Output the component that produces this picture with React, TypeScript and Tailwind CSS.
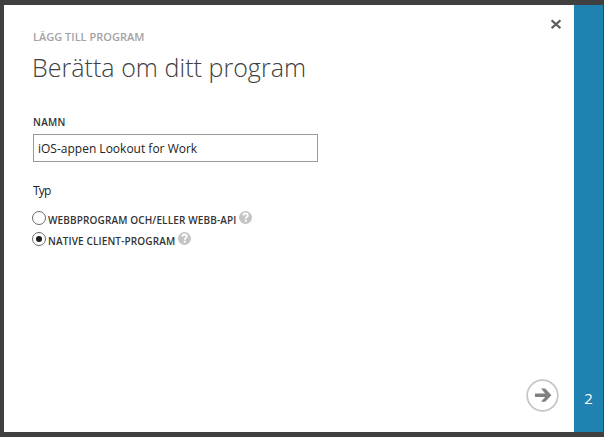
import { useState } from "react";

function HelpBadge() {
  return (
    <svg className="block h-[13px] w-[13px] shrink-0" viewBox="0 0 13 13" aria-label="?">
      <circle cx="6.5" cy="6.5" r="6.5" fill="#c4c4c4" />
      <path d="M4.3 4.5C4.4 3.2 5.3 2.5 6.5 2.5c1.4 0 2.3.7 2.3 1.8 0 1.6-2.1 1.6-2.1 3.5" fill="none" stroke="#fff" strokeWidth="1.8" />
      <rect x="5.7" y="8.8" width="2" height="1.9" fill="#fff" />
    </svg>
  );
}

function Radio({ checked }: { checked: boolean }) {
  return (
    <span className="-ml-px flex h-[14px] w-[14px] shrink-0 items-center justify-center rounded-full border border-[#6a6a6a] bg-white">
      {checked && <span className="h-[6px] w-[6px] rounded-full bg-[#1c1c1c]" />}
    </span>
  );
}

export default function App() {
  const [type, setType] = useState("native");
  return (
    <div className="flex h-[437px] w-[604px] overflow-hidden bg-[#404040] pt-[5px] pr-px pb-[5px] pl-1 font-['Open_Sans','Noto_Sans',sans-serif] text-[#333]">
      <main className="flex w-[570px] flex-col bg-white pl-[29px]">
        <header className="flex h-[81px] justify-between">
          <div className="pt-[24px]">
            <p className="h-4 text-[11px] leading-4 font-semibold whitespace-nowrap text-[#a3a3a3]">LÄGG TILL PROGRAM</p>
            <h1 className="mt-[4px] -ml-px h-9 text-[25px] leading-9 font-light tracking-[0.04px] whitespace-nowrap text-[#404040]">Berätta om ditt program</h1>
          </div>
          <button aria-label="Stäng" className="mt-[14px] mr-[13px] h-[10px] w-[10px]">
            <svg className="block" width="10" height="10" viewBox="0 0 10 10">
              <path d="M.6 1.4 9.4 9.2M9.4 1.4.6 9.2" stroke="#5c5c5c" strokeWidth="2.1" />
            </svg>
          </button>
        </header>
        <label className="mt-[28px] h-4 text-[10px] leading-4 font-semibold tracking-[0.3px]">NAMN</label>
        <div className="mt-[4px] flex h-[28px] w-[285px] items-center border border-[#999] pt-[2px] pl-1 text-[12px] whitespace-nowrap text-[#222]">
          iOS-appen Lookout for Work
        </div>
        <p className="mt-[21px] h-4 text-[12px] leading-4 tracking-[-0.8px] text-[#222]">Typ</p>
        <div className="mt-[12px] flex h-[14px] items-start text-[10px] font-semibold tracking-[0.13px] whitespace-nowrap" onClick={() => setType("web")}>
          <Radio checked={type === "web"} />
          <span className="mt-[2px] ml-[2px] w-[188px] leading-[14px]">WEBBPROGRAM OCH/ELLER WEBB-API</span>
          <span className="ml-[3px]"><HelpBadge /></span>
        </div>
        <div className="mt-[7px] flex h-[14px] items-start text-[10px] font-semibold tracking-[0.13px] whitespace-nowrap" onClick={() => setType("native")}>
          <Radio checked={type === "native"} />
          <span className="mt-[2px] ml-[2px] w-[127px] leading-[14px]">NATIVE CLIENT-PROGRAM</span>
          <span className="ml-[3px]"><HelpBadge /></span>
        </div>
        <button aria-label="Nästa" className="mt-auto mr-[15px] mb-[20px] self-end">
          <svg className="block" width="33" height="33" viewBox="0 0 33 33">
            <circle cx="16.5" cy="16.5" r="15.3" fill="#fff" stroke="#c6c6c6" strokeWidth="1.7" />
            <path d="M9 14.5h10.2L15 9.6h4.2l6.2 6.6-6.2 6.6H15l4.2-4.9H9z" fill="#808080" />
          </svg>
        </button>
      </main>
      <aside className="flex w-[29px] flex-col items-center justify-end bg-[#1f82b1] pb-[23px] text-[15px] leading-[22px] text-white">2</aside>
    </div>
  );
}
